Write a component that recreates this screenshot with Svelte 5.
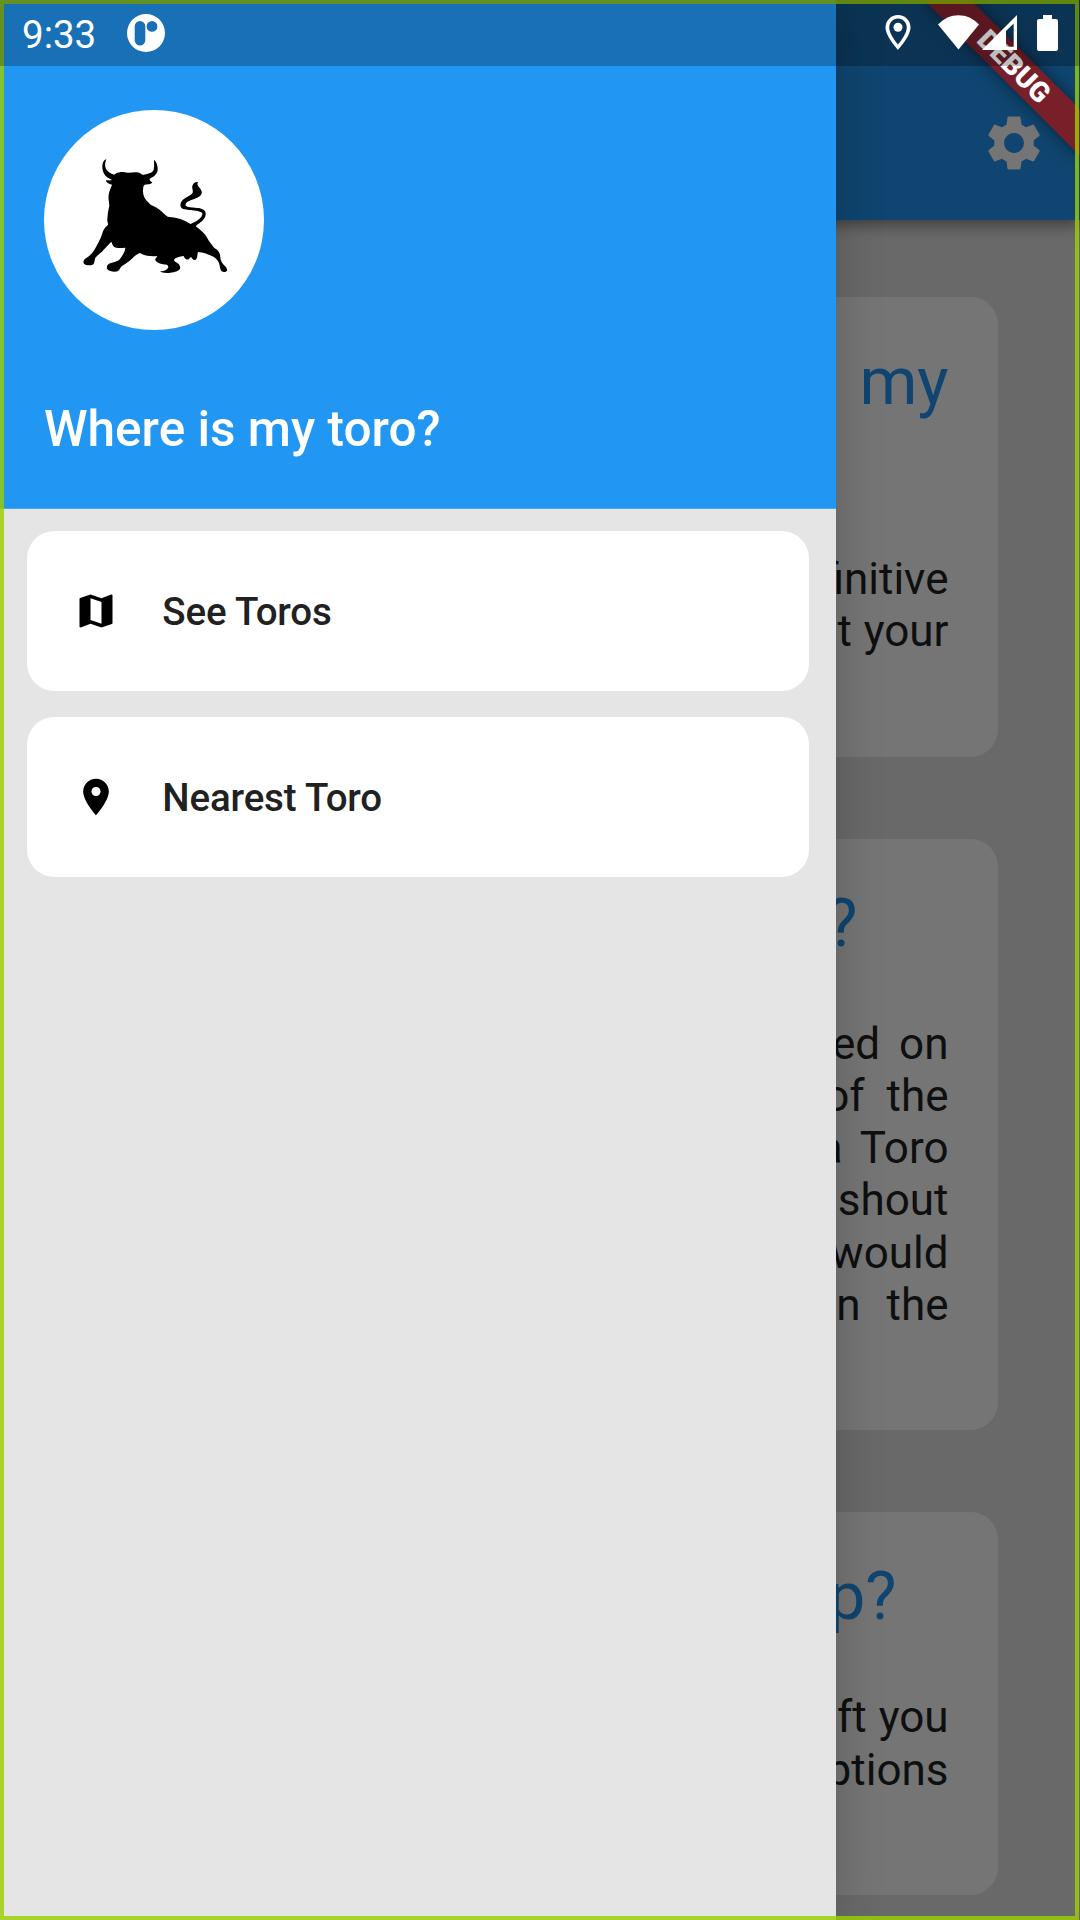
<script>
  const cards = [
    {
      title: [{ text: 'Where is my', gap: 14 }, { text: 'toro?', inset: 300 }],
      body: [
        { text: 'The definitive', gap: 1 },
        { text: 'about your', gap: 1 }
      ]
    },
    {
      title: [{ text: 'What is a toro?', inset: 91 }],
      body: [
        { text: 'based on', gap: 8 },
        { text: 'of the', gap: 11 },
        { text: 'a Toro', gap: 7 },
        { text: 'shout', gap: 0 },
        { text: 'would', gap: 0 },
        { text: 'in the', gap: 15 }
      ]
    },
    {
      title: [{ text: 'Need help?', inset: 52 }],
      body: [
        { text: 'left you', gap: 1 },
        { text: 'options', gap: 1 }
      ]
    }
  ];

  const entries = [
    { label: 'See Toros', icon: 'M20.5 3l-.16.03L15 5.1 9 3 3.36 4.9c-.21.07-.36.25-.36.48V20.5c0 .28.22.5.5.5l.16-.03L9 18.9l6 2.1 5.64-1.9c.21-.07.36-.25.36-.48V3.5c0-.28-.22-.5-.5-.5zM15 19l-6-2.11V5l6 2.11V19z' },
    { label: 'Nearest Toro', icon: 'M12 2C8.13 2 5 5.13 5 9c0 5.25 7 13 7 13s7-7.75 7-13c0-3.87-3.13-7-7-7zm0 9.5a2.5 2.5 0 0 1 0-5 2.5 2.5 0 0 1 0 5z' }
  ];
</script>

<div class="screen">
  <div class="page">
    <header class="appbar">
      <svg class="gear" viewBox="0 0 24 24"><path d="M19.14 12.94c.04-.3.06-.61.06-.94 0-.32-.02-.64-.07-.94l2.03-1.58c.18-.14.23-.41.12-.61l-1.92-3.32c-.12-.22-.37-.29-.59-.22l-2.39.96c-.5-.38-1.03-.7-1.62-.94l-.36-2.54c-.04-.24-.24-.41-.48-.41h-3.84c-.24 0-.43.17-.47.41l-.36 2.54c-.59.24-1.13.57-1.62.94l-2.39-.96c-.22-.08-.47 0-.59.22L2.74 8.87c-.12.21-.08.47.12.61l2.03 1.58c-.05.3-.09.63-.09.94s.02.64.07.94l-2.03 1.58c-.18.14-.23.41-.12.61l1.92 3.32c.12.22.37.29.59.22l2.39-.96c.5.38 1.03.7 1.62.94l.36 2.54c.05.24.24.41.48.41h3.84c.24 0 .44-.17.47-.41l.36-2.54c.59-.24 1.13-.56 1.62-.94l2.39.96c.22.08.47 0 .59-.22l1.92-3.32c.12-.22.07-.47-.12-.61l-2.01-1.58zM12 15.6c-1.98 0-3.6-1.62-3.6-3.6s1.62-3.6 3.6-3.6 3.6 1.62 3.6 3.6-1.62 3.6-3.6 3.6z" /></svg>
    </header>
    <main class="feed">
      {#each cards as card}
        <section class="card">
          <h2>
            {#each card.title as line}
              <span style:word-spacing="{line.gap ?? 0}px" style:padding-right="{line.inset ?? 0}px">{line.text}</span>
            {/each}
          </h2>
          <p>
            {#each card.body as line}
              <span style:word-spacing="{line.gap}px">{line.text}</span>
            {/each}
          </p>
        </section>
      {/each}
    </main>
  </div>

  <aside class="drawer">
    <div class="head">
      <div class="avatar">
        <svg viewBox="12 30 660 660">
          <path d="M199 178C193 179 188 186 187 197C186 213 193 228 207 235L216 240C209 243 203 240 197 241C199 247 205 252 216 254C214 262 208 270 206 285C204 298 208 306 208 318C204 332 203 346 202 357C201 366 206 371 203 376C194 382 190 390 186 403C181 419 172 434 163 450C156 461 148 469 138 475C130 480 129 486 132 491C137 496 153 498 160 493C164 489 163 482 166 473C174 464 184 458 191 449C199 440 206 434 214 425C217 429 216 436 223 441C232 446 245 443 256 443C255 455 248 466 240 477C232 486 220 486 210 490C202 493 198 502 202 508C208 516 225 516 233 514C239 510 240 504 245 499C256 491 266 486 275 477C283 468 291 463 299 459C314 468 334 470 352 468C350 473 344 476 346 481C350 488 360 492 369 493C378 494 384 494 385 500C384 508 375 513 360 514C365 519 379 520 391 518C405 517 417 512 420 506C422 499 418 492 411 488C405 485 401 485 403 478C408 472 418 470 431 468C433 476 441 482 447 477C450 473 451 471 454 472C457 478 462 482 467 479C474 473 471 463 474 456C490 456 501 463 514 467C523 470 529 475 535 485C541 495 539 508 545 514C549 517 558 517 561 512C563 506 557 500 551 494C545 488 541 480 541 471C540 460 536 452 528 447C521 444 517 436 512 430C504 420 499 406 490 398C482 390 473 384 467 379C473 371 485 368 491 358C497 350 499 341 495 334C491 326 479 324 466 323C455 321 443 322 437 317C435 309 443 304 454 300C465 296 480 292 484 283C489 274 480 265 474 257C471 253 473 249 474 246C465 245 459 250 457 258C455 264 460 271 458 278C453 286 443 289 435 295C426 300 419 309 422 320C426 330 440 328 452 330C465 332 483 333 487 340C488 349 478 358 470 363C464 367 457 368 452 372C440 365 425 357 409 354C399 351 390 352 383 350C371 341 362 330 350 323C340 317 332 316 326 308C314 299 308 285 309 270C310 263 309 257 314 254C322 253 334 254 337 247C332 244 328 241 329 236C340 232 351 223 353 211C354 198 349 184 342 180C341 189 344 198 341 209C337 220 322 221 309 225C303 223 299 217 289 217C280 215 271 220 262 218C250 214 235 216 229 220L222 224C210 220 199 213 196 201C194 192 197 184 199 178Z" />
        </svg>
      </div>
      <h1>Where is my toro?</h1>
    </div>
    <nav>
      {#each entries as entry}
        <div class="entry">
          <svg viewBox="0 0 24 24"><path d={entry.icon} /></svg>
          <span>{entry.label}</span>
        </div>
      {/each}
    </nav>
  </aside>

  <div class="ribbon">DEBUG</div>
  <div class="frame"></div>

  <div class="status">
    <span class="time">9:33</span>
    <svg class="notice" viewBox="0 0 38 38">
      <path fill-rule="evenodd" d="M19 0a19 19 0 1 0 0 38a19 19 0 1 0 0-38zM13 7a5.3 5.3 0 0 1 5.3 5.3v14a5.3 5.3 0 0 1-10.6 0v-14A5.3 5.3 0 0 1 13 7zM25 7a5.4 5.4 0 1 1 0 10.8a5.4 5.4 0 1 1 0-10.8z" />
    </svg>
    <svg class="signals" viewBox="880 10 184 46">
      <path fill-rule="evenodd" d="M898 15c-7 0-12.500 5.500-12.500 12.500c0 9 12.500 22.300 12.500 22.300s12.500-13.300 12.500-22.300c0-7-5.500-12.500-12.500-12.500zM898 18.500c5 0 8.800 4 8.800 9c0 5-5 12.500-8.800 17c-3.800-4.500-8.800-12-8.800-17c0-5 3.800-9 8.800-9z" />
      <circle cx="898" cy="27.300" r="4.500" />
      <path d="M938 24.500C949.500 12 967.500 12 979 24.500L958.500 49.500Z" />
      <path fill-rule="evenodd" d="M1017 15V50H982ZM1013.700 23.500L1006 31V46.700H1013.700Z" />
      <path d="M1043 15h9v4h4a2 2 0 0 1 2 2v28a2 2 0 0 1-2 2h-17a2 2 0 0 1-2-2v-28a2 2 0 0 1 2-2h4z" />
    </svg>
  </div>
</div>

<style>
  :global(body) {
    margin: 0;
    background: #696969;
  }
  .screen {
    position: relative;
    width: 1080px;
    height: 1920px;
    overflow: hidden;
    font-family: Roboto, 'Liberation Sans', sans-serif;
    background: #696969;
  }
  h1, h2, p {
    margin: 0;
  }
  svg {
    display: block;
    flex: none;
  }
  .page {
    display: flex;
    flex-direction: column;
    height: 100%;
  }
  .appbar {
    flex: none;
    display: flex;
    justify-content: flex-end;
    box-sizing: border-box;
    height: 220px;
    padding: 110px 33px 0 0;
    background: #0f4570;
    box-shadow: 0 5px 14px rgba(0, 0, 0, 0.42);
  }
  .gear {
    width: 66px;
    height: 66px;
    fill: #757575;
  }
  .feed {
    display: flex;
    flex-direction: column;
    gap: 82px;
    padding: 77px 82px 0;
  }
  .card {
    flex: none;
    padding: 46px 49.5px 99px;
    border-radius: 27.5px;
    background: #757575;
    text-align: right;
    white-space: nowrap;
  }
  .card span {
    display: block;
  }
  h2 {
    font-size: 66px;
    line-height: 77px;
    font-weight: 400;
    color: #0f4570;
  }
  p {
    margin-top: 56px;
    font-size: 44px;
    line-height: 52.3px;
    color: #0f0f0f;
  }
  .drawer {
    position: absolute;
    inset: 0 auto 0 0;
    width: 836px;
    background: #e5e5e5;
    box-shadow: 0 0 46px rgba(0, 0, 0, 0.2);
  }
  .head {
    box-sizing: border-box;
    height: 509px;
    padding: 110px 44px 0;
    border-bottom: 1px solid #4da6ef;
    background: #2196f3;
  }
  .avatar {
    width: 220px;
    height: 220px;
    border-radius: 50%;
    background: #fff;
  }
  h1 {
    margin-top: 70px;
    font-size: 49.5px;
    line-height: 58px;
    font-weight: 500;
    color: #fff;
  }
  nav {
    display: flex;
    flex-direction: column;
    gap: 26.5px;
    padding: 22px 27px;
  }
  .entry {
    display: flex;
    align-items: center;
    gap: 44px;
    height: 159.7px;
    padding-left: 47.3px;
    border-radius: 27.5px;
    background: #fff;
    font-size: 38.5px;
    line-height: 46px;
    font-weight: 500;
    letter-spacing: -0.15px;
    color: #212121;
  }
  .entry span {
    padding-top: 2px;
  }
  .entry svg {
    width: 44px;
    height: 44px;
    fill: #000;
  }
  .ribbon {
    position: absolute;
    top: 49.500px;
    left: 904px;
    width: 220px;
    height: 33px;
    transform: rotate(45deg);
    background: #781f2a;
    box-shadow: 0 0 16px rgba(0, 0, 0, 0.5);
    font-size: 28px;
    line-height: 33px;
    font-weight: 900;
    text-align: center;
    color: #fff;
  }
  .frame {
    position: absolute;
    inset: 0 1px 0 0;
    border: 4px solid rgba(155, 205, 3, 0.82);
  }
  .status {
    position: absolute;
    inset: 0 0 auto 0;
    box-sizing: border-box;
    display: flex;
    align-items: center;
    height: 66px;
    padding: 0 16px 0 22px;
    background: rgba(0, 0, 0, 0.25);
    color: #fff;
    fill: #fff;
  }
  .time {
    width: 105.4px;
    font-size: 38.5px;
    line-height: 46px;
    padding-top: 4px;
  }
  .notice {
    width: 38px;
    height: 38px;
  }
  .signals {
    width: 184px;
    height: 46px;
    margin-left: auto;
  }
</style>
